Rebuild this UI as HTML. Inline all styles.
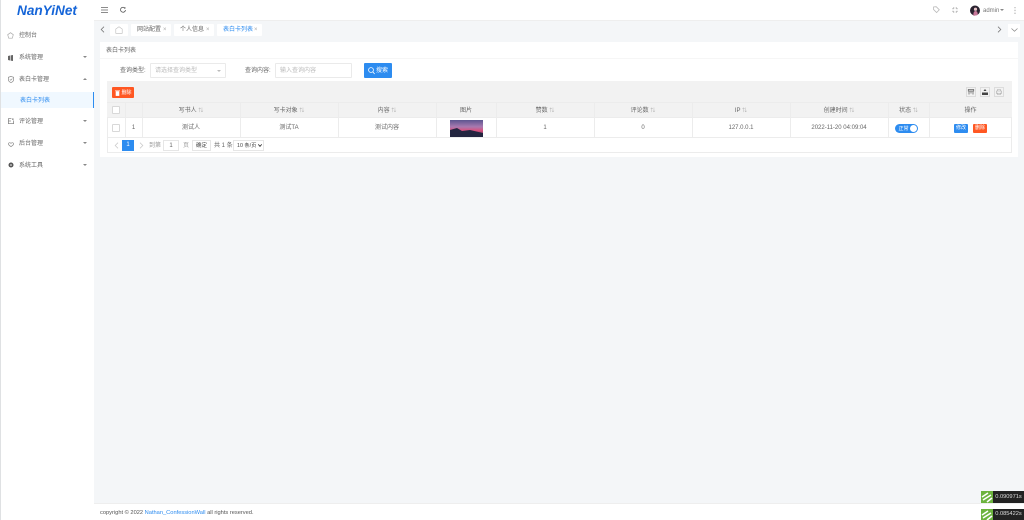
<!DOCTYPE html>
<html lang="zh-CN"><head><meta charset="utf-8"><title>表白卡列表</title>
<style>
html,body{margin:0;padding:0;width:1024px;height:520px;overflow:hidden;background:#f4f6f8;font-family:"Liberation Sans","Noto Sans CJK SC",sans-serif;color:#666;font-size:6px}
div,span,svg{position:absolute;box-sizing:border-box}
#w{left:0;top:0;width:1024px;height:520px;filter:blur(.3px)}
.t{white-space:nowrap;line-height:10px;height:10px;margin-top:.7px}
.c{text-align:center}
.side{left:0;top:0;width:94px;height:520px;background:#fff;border-left:1px solid #dfe1e3}
.tab{top:24px;height:12px;background:#fff;border-radius:1px;line-height:13px;white-space:nowrap}
.x{color:#aaa;font-size:6px}
.b{top:0;bottom:0;width:1px;background:#ececec}
.ar{width:0;height:0;border-left:2.5px solid transparent;border-right:2.5px solid transparent;border-top:2.5px solid #888}
.sort{color:#aaa;font-size:5px;letter-spacing:0}
.cb{width:8px;height:8px;background:#fff;border:1px solid #d8d8d8;border-radius:1px}
.ic{width:10px;height:10px;border:1px solid #dcdcdc;top:87px}
svg{overflow:visible}
</style></head><body><div id="w">

<div style="left:94px;top:0;width:930px;height:21px;background:#fff;border-bottom:1px solid #eee"></div>

<div class="side"></div>
<div class="t" style="left:17px;top:3.5px;font:italic bold 13.6px/14px 'Liberation Sans',sans-serif;color:#1565d8;height:14px;margin:0">NanYiNet</div>

<svg style="left:7px;top:31.5px" width="7" height="7" viewBox="0 0 7 7"><path d="M3.5 .7 6.3 2.7 5.3 6.2H1.7L.7 2.7Z" fill="none" stroke="#aaa" stroke-width=".7"/></svg>
<div class="t" style="left:19px;top:30px">控制台</div>

<svg style="left:8px;top:54.5px" width="5" height="6" viewBox="0 0 5 6"><path d="M0 1 2 .5V5.5L0 5ZM2.6.4 5 0V6L2.6 5.6Z" fill="#666"/></svg>
<div class="t" style="left:19px;top:52px">系统管理</div><div class="ar" style="left:83px;top:56px"></div>

<svg style="left:8px;top:75.5px" width="6" height="7" viewBox="0 0 6 7"><path d="M3 .4 5.6 1.3V3.6C5.6 5 4.4 6 3 6.6 1.6 6 .4 5 .4 3.6V1.3Z" fill="none" stroke="#888" stroke-width=".7"/><path d="M1.8 3.3 2.8 4.3 4.3 2.6" fill="none" stroke="#888" stroke-width=".6"/></svg>
<div class="t" style="left:19px;top:74px">表白卡管理</div><div class="ar" style="left:83px;top:78px;border-top:0;border-bottom:2.5px solid #888"></div>

<div style="left:1px;top:92px;width:93px;height:16px;background:#f0f8ff;border-right:1px solid #2d8cf0"></div>
<div class="t" style="left:20px;top:95px;color:#2d8cf0">表白卡列表</div>

<svg style="left:8px;top:118px" width="6" height="6" viewBox="0 0 6 6"><path d="M.4.5H3.4M.4.5V5.6H5.6V2.5M.4 3H3" fill="none" stroke="#888" stroke-width=".8"/><path d="M4 .5H5.6V1.8H4Z" fill="#888"/></svg>
<div class="t" style="left:19px;top:116px">评论管理</div><div class="ar" style="left:83px;top:120px"></div>

<svg style="left:8px;top:141.5px" width="6" height="5" viewBox="0 0 6 5"><path d="M.4 1.6C1 .4 2.4.5 3 1.4 3.6.5 5 .4 5.6 1.6 5.8 2.6 4 4 3 4.6 2 4 .2 2.6.4 1.6Z" fill="none" stroke="#888" stroke-width=".7"/></svg>
<div class="t" style="left:19px;top:138px">后台管理</div><div class="ar" style="left:83px;top:142px"></div>

<svg style="left:8px;top:162px" width="6" height="6" viewBox="0 0 6 6"><circle cx="3" cy="3" r="2.5" fill="#555"/><circle cx="3" cy="3" r=".8" fill="#fff"/></svg>
<div class="t" style="left:19px;top:160px">系统工具</div><div class="ar" style="left:83px;top:164px"></div>

<svg style="left:101px;top:7px" width="7" height="6" viewBox="0 0 7 6"><path d="M0 .5H7M0 3H7M0 5.5H7" stroke="#666" stroke-width=".8"/></svg>
<svg style="left:120px;top:7px" width="6" height="6" viewBox="0 0 6 6"><path d="M5 1.2A2.5 2.5 0 1 0 5.5 3" fill="none" stroke="#555" stroke-width=".8"/><path d="M3.8 1.6H5.4V0Z" fill="#555"/></svg>

<svg style="left:933px;top:6px" width="7" height="7" viewBox="0 0 7 7"><path d="M.5 1V3.4L3.6 6.5 6.3 3.8 3.2.7Z" fill="none" stroke="#bbb" stroke-width=".8"/></svg>
<svg style="left:952px;top:7px" width="6" height="6" viewBox="0 0 6 6"><path d="M0 1.8H1.8V0M4.2 0V1.8H6M0 4.2H1.8V6M4.2 6V4.2H6" fill="none" stroke="#aaa" stroke-width=".7"/></svg>
<svg style="left:970px;top:5px" width="10" height="11" viewBox="0 0 10 11"><circle cx="5" cy="5.5" r="5" fill="#2b2230"/><path d="M3.5 11C3 8 4 6 5.5 6 7.5 6 8 8.5 7.6 10Z" fill="#c9799a"/><circle cx="5.5" cy="4.2" r="1.6" fill="#e8c5c8"/></svg>
<div class="t" style="left:983px;top:5px;color:#777">admin</div><div class="ar" style="left:1000px;top:8.5px"></div>
<svg style="left:1014px;top:7px" width="2" height="7" viewBox="0 0 2 7"><path d="M1 0V1.2M1 2.8V4.1M1 5.6V7" stroke="#aaa" stroke-width="1"/></svg>

<svg style="left:100px;top:26px" width="5" height="7" viewBox="0 0 5 7"><path d="M4 .7 1.2 3.5 4 6.3" fill="none" stroke="#777" stroke-width=".8"/></svg>
<div class="tab" style="left:110px;width:18px"></div>
<svg style="left:115px;top:26px" width="8" height="8" viewBox="0 0 8 8"><path d="M4 .7 7.2 3V7.3H.8V3Z" fill="none" stroke="#bbb" stroke-width=".6"/></svg>
<div class="tab" style="left:131px;width:40px;padding-left:6px">网站配置<span class="x" style="left:32px;top:0">×</span></div>
<div class="tab" style="left:174px;width:40px;padding-left:6px">个人信息<span class="x" style="left:32px;top:0">×</span></div>
<div class="tab" style="left:217px;width:45px;padding-left:6px;color:#2d8cf0">表白卡列表<span class="x" style="left:37px;top:0">×</span></div>
<svg style="left:997px;top:26px" width="5" height="7" viewBox="0 0 5 7"><path d="M1 .7 3.8 3.5 1 6.3" fill="none" stroke="#777" stroke-width=".8"/></svg>
<div style="left:1008px;top:24px;width:12px;height:13px;background:#fff"></div>
<svg style="left:1011px;top:28px" width="7" height="4" viewBox="0 0 7 4"><path d="M.5.5 3.5 3.3 6.5.5" fill="none" stroke="#888" stroke-width=".7"/></svg>

<div style="left:100px;top:42px;width:918px;height:115px;background:#fff"></div>
<div style="left:100px;top:58px;width:918px;height:1px;background:#f6f6f6"></div>
<div class="t" style="left:106px;top:45px">表白卡列表</div>

<div class="t" style="left:120px;top:65px">查询类型:</div>
<div style="left:150px;top:63px;width:76px;height:15px;border:1px solid #eaeaea;border-radius:1px"></div>
<div class="t" style="left:155px;top:65px;color:#bbb">请选择查询类型</div>
<div class="ar" style="left:217px;top:69.5px;border-top-color:#bbb"></div>
<div class="t" style="left:245px;top:65px">查询内容:</div>
<div style="left:275px;top:63px;width:77px;height:15px;border:1px solid #eaeaea;border-radius:1px"></div>
<div class="t" style="left:280px;top:65px;color:#bbb">输入查询内容</div>
<div style="left:364px;top:63px;width:28px;height:15px;background:#2d8cf0;border-radius:1px"></div>
<svg style="left:368px;top:66.5px" width="7" height="8" viewBox="0 0 7 8"><circle cx="3" cy="3" r="2.4" fill="none" stroke="#fff" stroke-width=".8"/><path d="M4.8 4.8 6.6 7" stroke="#fff" stroke-width=".8"/></svg>
<div class="t" style="left:376px;top:65px;color:#fff">搜索</div>

<div style="left:107px;top:81px;width:905px;height:72px;border:1px solid #ececec;border-top:0"></div>
<div style="left:107px;top:81px;width:905px;height:21px;background:#f2f2f2"></div>
<div style="left:112px;top:87px;width:22px;height:11px;background:#ff5722;border-radius:1px"></div>
<svg style="left:115px;top:89.5px" width="5" height="6" viewBox="0 0 5 6"><path d="M0 .8H5M1 1.6H4V5.6H1Z" fill="#fff" stroke="#fff" stroke-width=".6"/></svg>
<div class="t" style="left:121.5px;top:87px;color:#fff;font-size:5px">删除</div>

<div class="ic" style="left:966px"></div>
<svg style="left:968px;top:89px" width="6" height="6" viewBox="0 0 6 6"><path d="M.3.5H5.7V2H.3ZM1 2V5.5M3 2V4.5M5 2V5.5" fill="none" stroke="#666" stroke-width=".8"/></svg>
<div class="ic" style="left:980px"></div>
<svg style="left:982px;top:89px" width="6" height="6" viewBox="0 0 6 6"><path d="M3 0 4.5 2H1.5ZM0 3.5H6V6H0Z" fill="#444"/></svg>
<div class="ic" style="left:994px"></div>
<svg style="left:996px;top:89px" width="6" height="6" viewBox="0 0 6 6"><path d="M1.5 2V.5H4.5V2M.5 2H5.5V4.5H.5ZM1.5 3.8V5.5H4.5V3.8" fill="none" stroke="#aaa" stroke-width=".6"/></svg>

<div style="left:107px;top:102px;width:905px;height:16px;background:#f2f2f2;border-top:1px solid #ececec;border-bottom:1px solid #ececec"></div>
<div style="left:107px;top:137px;width:905px;height:1px;background:#ececec"></div>

<div style="left:0;top:102px;width:1024px;height:35px">
<div class="b" style="left:125px"></div><div class="b" style="left:142px"></div><div class="b" style="left:240px"></div><div class="b" style="left:338px"></div><div class="b" style="left:436px"></div><div class="b" style="left:496px"></div><div class="b" style="left:594px"></div><div class="b" style="left:692px"></div><div class="b" style="left:790px"></div><div class="b" style="left:888px"></div><div class="b" style="left:929px"></div>
</div>

<div class="cb" style="left:112px;top:106px"></div>
<div class="cb" style="left:112px;top:124px"></div>
<div class="t c" style="left:125px;top:122px;width:17px">1</div>

<div class="t c" style="left:142px;top:105px;width:98px">写书人 <span class="sort" style="position:static">⇅</span></div>
<div class="t c" style="left:240px;top:105px;width:98px">写卡对象 <span class="sort" style="position:static">⇅</span></div>
<div class="t c" style="left:338px;top:105px;width:98px">内容 <span class="sort" style="position:static">⇅</span></div>
<div class="t c" style="left:436px;top:105px;width:60px">图片</div>
<div class="t c" style="left:496px;top:105px;width:98px">赞数 <span class="sort" style="position:static">⇅</span></div>
<div class="t c" style="left:594px;top:105px;width:98px">评论数 <span class="sort" style="position:static">⇅</span></div>
<div class="t c" style="left:692px;top:105px;width:98px">IP <span class="sort" style="position:static">⇅</span></div>
<div class="t c" style="left:790px;top:105px;width:98px">创建时间 <span class="sort" style="position:static">⇅</span></div>
<div class="t c" style="left:888px;top:105px;width:41px">状态 <span class="sort" style="position:static">⇅</span></div>
<div class="t c" style="left:929px;top:105px;width:83px">操作</div>

<div class="t c" style="left:142px;top:122px;width:98px">测试人</div>
<div class="t c" style="left:240px;top:122px;width:98px">测试TA</div>
<div class="t c" style="left:338px;top:122px;width:98px">测试内容</div>
<svg style="left:450px;top:120px" width="33" height="17" viewBox="0 0 33 17"><defs><linearGradient id="g" x1="0" y1="0" x2="0" y2="1"><stop offset="0" stop-color="#5c5590"/><stop offset=".4" stop-color="#a87ab0"/><stop offset=".62" stop-color="#d9507e"/><stop offset="1" stop-color="#3d3a5c"/></linearGradient></defs><rect width="33" height="17" fill="url(#g)"/><path d="M0 10 7 8 12 11 20 10 33 13V17H0Z" fill="#232540"/></svg>
<div class="t c" style="left:496px;top:122px;width:98px">1</div>
<div class="t c" style="left:594px;top:122px;width:98px">0</div>
<div class="t c" style="left:692px;top:122px;width:98px">127.0.0.1</div>
<div class="t c" style="left:790px;top:122px;width:98px">2022-11-20 04:09:04</div>

<div style="left:895px;top:124px;width:23px;height:9px;background:#2d8cf0;border-radius:5px"></div>
<div style="left:910px;top:125px;width:7px;height:7px;background:#fff;border-radius:50%"></div>
<div class="t" style="left:898.5px;top:123.3px;color:#fff;font-size:5px">正常</div>

<div class="t c" style="left:954px;top:124px;width:14px;height:9px;line-height:9px;background:#2d8cf0;color:#fff;font-size:5px;border-radius:1px;margin:0">修改</div>
<div class="t c" style="left:973px;top:124px;width:14px;height:9px;line-height:9px;background:#ff5722;color:#fff;font-size:5px;border-radius:1px;margin:0">删除</div>

<svg style="left:114px;top:142px" width="5" height="7" viewBox="0 0 5 7"><path d="M4 .7 1.2 3.5 4 6.3" fill="none" stroke="#ccc" stroke-width=".8"/></svg>
<div class="t c" style="left:122px;top:140px;width:12px;height:11px;line-height:11px;background:#2d8cf0;color:#fff;margin:0">1</div>
<svg style="left:139px;top:142px" width="5" height="7" viewBox="0 0 5 7"><path d="M1 .7 3.8 3.5 1 6.3" fill="none" stroke="#ccc" stroke-width=".8"/></svg>
<div class="t" style="left:149px;top:140px;color:#999">到第</div>
<div class="t c" style="left:163px;top:140px;width:16px;height:11px;line-height:10px;border:1px solid #e6e6e6;margin:0">1</div>
<div class="t" style="left:183px;top:140px;color:#999">页</div>
<div class="t c" style="left:192px;top:140px;width:19px;height:11px;line-height:10px;border:1px solid #e6e6e6;color:#444;font-size:5.5px;margin:0">确定</div>
<div class="t" style="left:214px;top:140px">共 1 条</div>
<div class="t" style="left:233px;top:140px;width:31px;height:11px;line-height:10px;border:1px solid #e6e6e6;padding-left:3px;color:#444;font-size:5.3px;margin:0">10 条/页</div>
<svg style="left:258px;top:144px" width="4" height="3" viewBox="0 0 4 3"><path d="M.3.4 2 2.4 3.7.4" fill="none" stroke="#222" stroke-width=".8"/></svg>

<div style="left:94px;top:503px;width:930px;height:17px;background:#fff;border-top:1px solid #eee"></div>
<div class="t" style="left:100px;top:507px;color:#555;font-size:5.7px">copyright © 2022 <span style="position:static;color:#2d8cf0">Nathan_ConfessionWall</span> all rights reserved.</div>

<svg style="left:981px;top:491px" width="12" height="12" viewBox="0 0 12 12"><rect width="12" height="12" fill="#6cb33e"/><path d="M1 6 7 2M2 9 10 4M6 11 11 7" stroke="#fff" stroke-width="1.5"/></svg>
<div class="t c" style="left:993px;top:491px;width:31px;height:12px;line-height:12px;background:#222;color:#ddd;font-size:5.7px;margin:0">0.090971s</div>
<svg style="left:981px;top:509px" width="12" height="11" viewBox="0 0 12 11"><rect width="12" height="11" fill="#6cb33e"/><path d="M1 6 7 2M2 9 10 4M6 11 11 7" stroke="#fff" stroke-width="1.5"/></svg>
<div class="t c" style="left:993px;top:509px;width:31px;height:11px;line-height:11px;background:#222;color:#ddd;font-size:5.7px;margin:0">0.085422s</div>

</div></body></html>
